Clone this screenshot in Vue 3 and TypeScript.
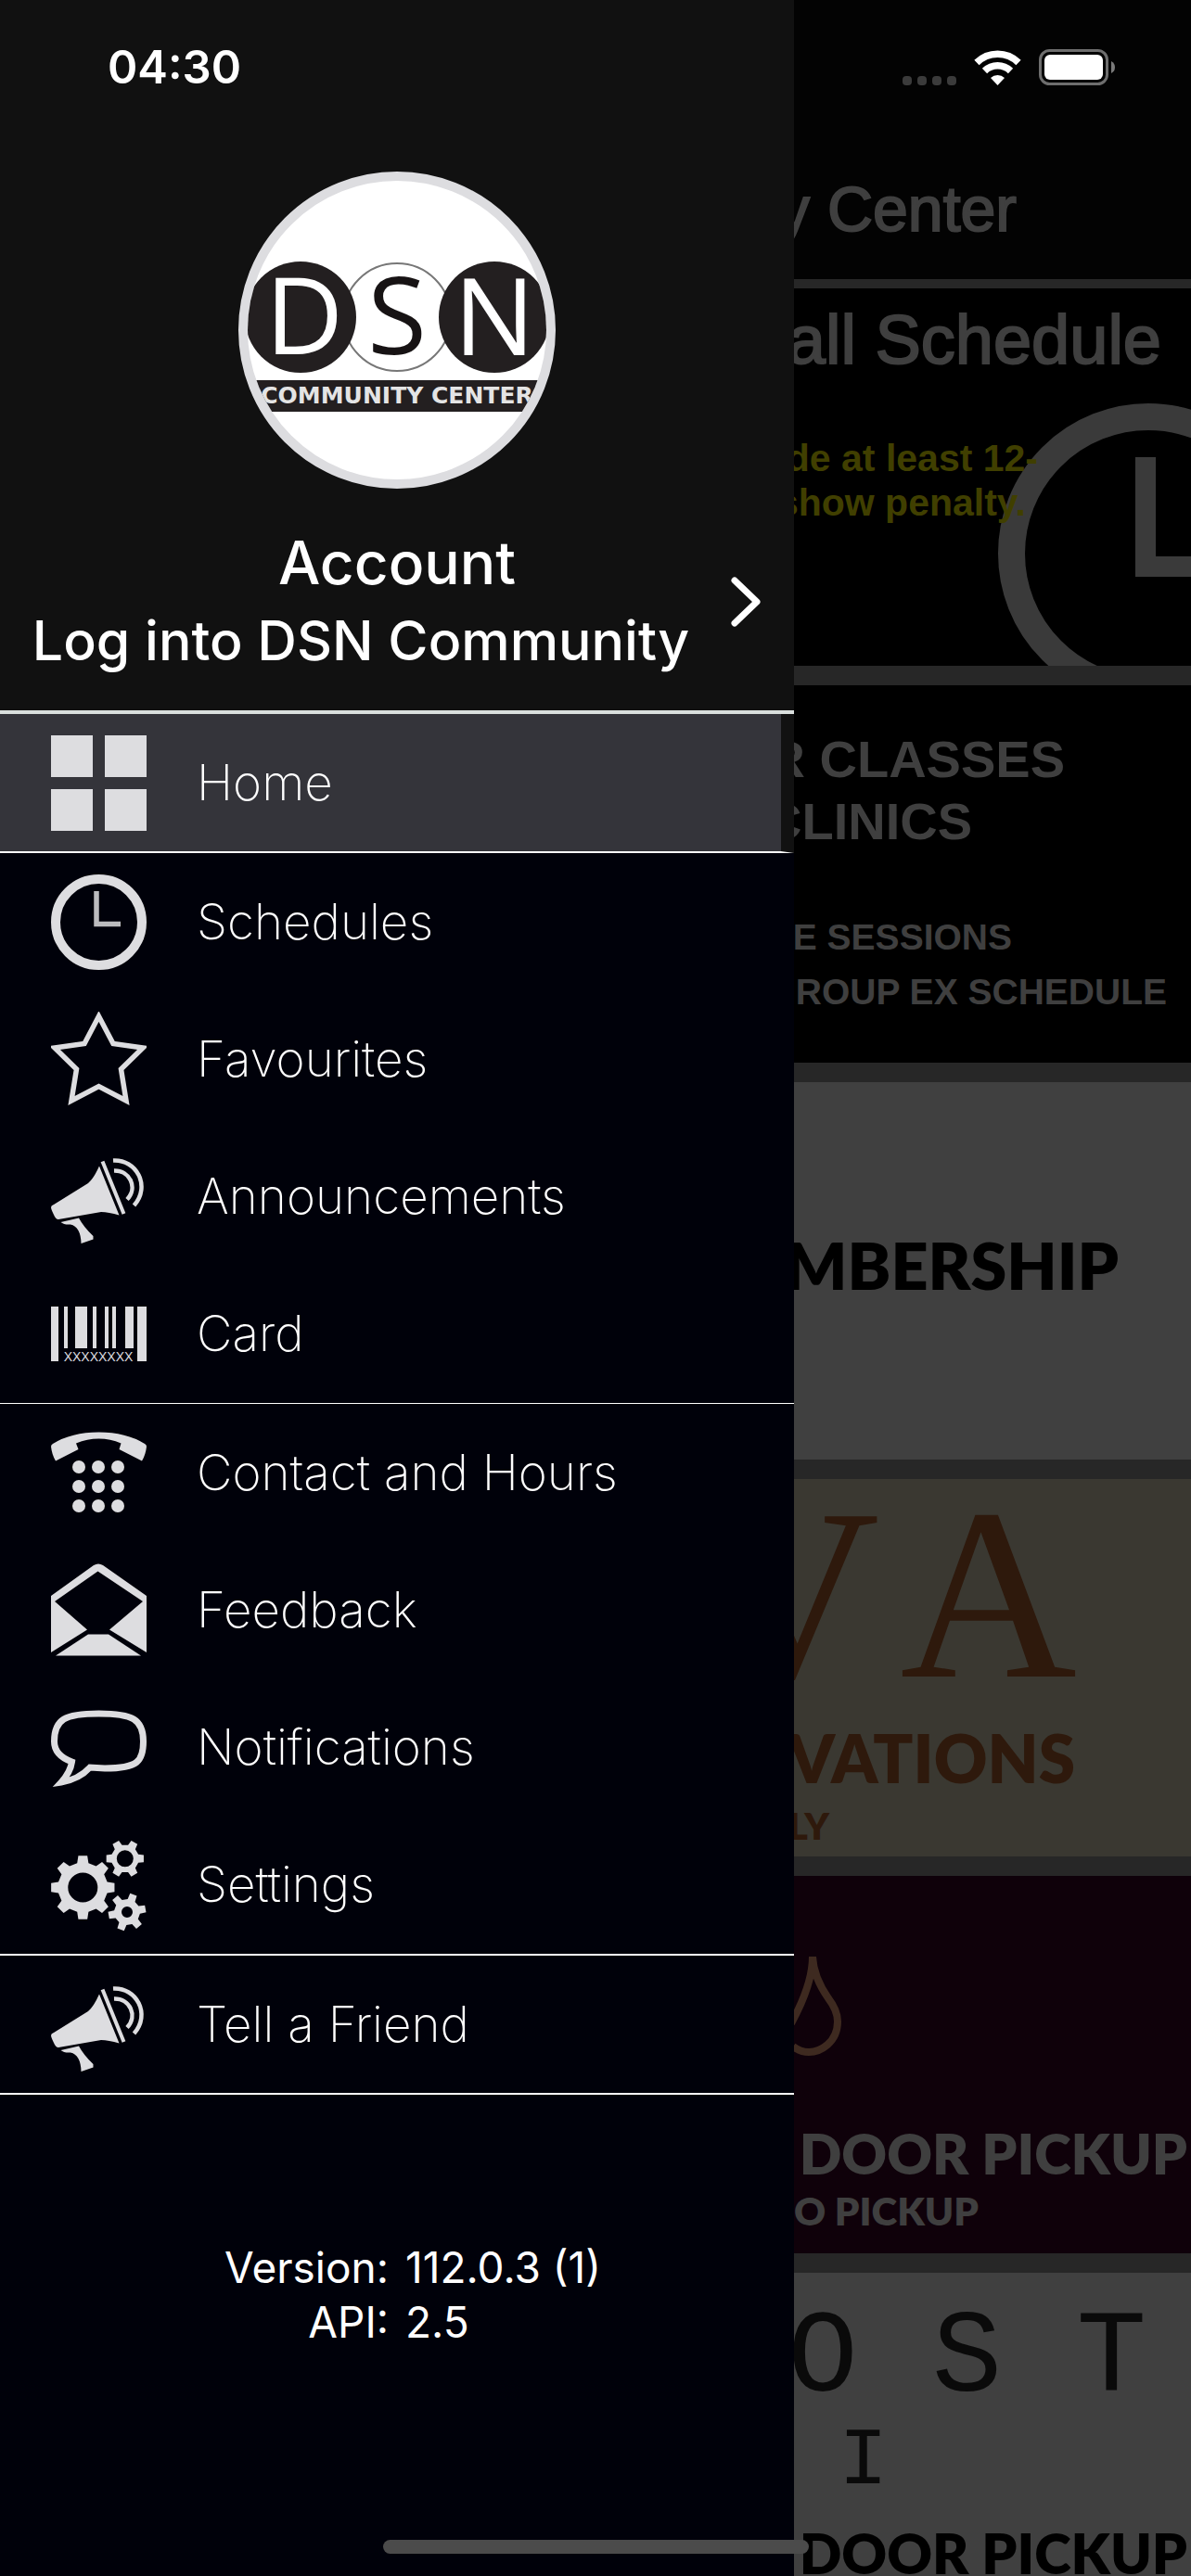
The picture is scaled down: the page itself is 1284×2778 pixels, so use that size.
<script setup lang="ts">
type IconName =
  | 'grid' | 'clock' | 'star' | 'megaphone' | 'barcode'
  | 'phone' | 'envelope' | 'bubble' | 'gears'

interface MenuItem {
  label: string
  icon: IconName
}

const groups: { id: string; items: MenuItem[] }[] = [
  { id: 'home', items: [{ label: 'Home', icon: 'grid' }] },
  {
    id: 'browse',
    items: [
      { label: 'Schedules', icon: 'clock' },
      { label: 'Favourites', icon: 'star' },
      { label: 'Announcements', icon: 'megaphone' },
      { label: 'Card', icon: 'barcode' },
    ],
  },
  {
    id: 'support',
    items: [
      { label: 'Contact and Hours', icon: 'phone' },
      { label: 'Feedback', icon: 'envelope' },
      { label: 'Notifications', icon: 'bubble' },
      { label: 'Settings', icon: 'gears' },
    ],
  },
  { id: 'share', items: [{ label: 'Tell a Friend', icon: 'megaphone' }] },
]

const bars: [number, number][] = [
  [14, 4], [26, 13], [45, 4], [58, 4], [66, 4], [80, 9],
]
const keys = [45, 66, 87].flatMap((y) => [30, 51, 72].map((x) => ({ x, y })))

/* Outline of a cog wheel with a round hole, for an even-odd fill. */
function gear(cx: number, cy: number, outer: number, root: number, hole: number, teeth: number, turn: number): string {
  const step = (Math.PI * 2) / teeth
  const pts: string[] = []
  const at = (r: number, a: number) => `${(cx + r * Math.cos(a)).toFixed(2)} ${(cy + r * Math.sin(a)).toFixed(2)}`
  for (let i = 0; i < teeth; i++) {
    const a = i * step + (turn * Math.PI) / 180
    pts.push(at(root, a - step * 0.29), at(outer, a - step * 0.18), at(outer, a + step * 0.18), at(root, a + step * 0.29))
  }
  return `M${pts.join('L')}Z M${cx - hole} ${cy}a${hole} ${hole} 0 1 0 ${hole * 2} 0a${hole} ${hole} 0 1 0 ${-hole * 2} 0Z`
}
const cogs = [
  gear(34.3, 54.5, 34.5, 27, 16, 8, 0),
  gear(79.8, 23.3, 20.5, 15, 9, 6, 0),
  gear(82, 81, 20.5, 14, 6, 6, -10),
].join(' ')
</script>

<template>
  <div class="app">
    <header class="status">
      <span class="time">04:30</span>
      <div class="indicators">
        <div class="signal"><i></i><i></i><i></i><i></i></div>
        <svg class="wifi" viewBox="0 0 51 38" aria-label="Wi-Fi">
          <g fill="none" stroke="#fff" stroke-width="7.5">
            <path d="M3 13.5A32 32 0 0 1 48 13.5" />
            <path d="M11.500 22.500A20 20 0 0 1 39.500 22.500" />
          </g>
          <path d="M18 30A11 11 0 0 1 33 30L25.500 38Z" fill="#fff" />
        </svg>
        <svg class="battery" viewBox="0 0 82 39" aria-label="Battery">
          <rect x="1.500" y="1.500" width="72" height="36" rx="10" fill="none" stroke="#6e6e6e" stroke-width="3" />
          <rect x="6" y="6" width="63" height="27" rx="6" fill="#fff" />
          <path d="M78 13Q82 15 82 19.500T78 26Z" fill="#7a7a7a" />
        </svg>
      </div>
    </header>

    <aside class="drawer">
      <a class="profile" href="#account">
        <span class="avatar">
          <svg viewBox="10 10 322 322" role="img" aria-label="DSN Community Center">
            <circle cx="171" cy="157" r="58" fill="#fff" stroke="#777" stroke-width="2" />
            <circle cx="67" cy="157" r="60" fill="#231f20" />
            <circle cx="276" cy="157" r="60" fill="#231f20" />
            <g class="logo-letters" text-anchor="middle">
              <text x="71" y="197" fill="#fff">D</text>
              <text x="171" y="197" fill="#171314">S</text>
              <text x="276" y="198" fill="#fff">N</text>
            </g>
            <rect x="0" y="225" width="342" height="34" fill="#231f20" />
            <text class="logo-name" x="171" y="250" text-anchor="middle" fill="#e4e4e4">COMMUNITY CENTER</text>
          </svg>
        </span>
        <span class="account">Account</span>
        <span class="login">Log into DSN Community</span>
        <svg class="chevron" viewBox="0 0 32 54" aria-hidden="true">
          <path d="M4 4L28 27L4 50" fill="none" stroke="#fff" stroke-width="7" stroke-linecap="round" stroke-linejoin="round" />
        </svg>
      </a>

      <nav>
        <ul v-for="group in groups" :key="group.id" class="group" :class="group.id">
          <li v-for="item in group.items" :key="item.label">
            <a class="item" href="#menu">
              <svg class="icon" viewBox="0 0 103 103" aria-hidden="true">
                <path v-if="item.icon === 'grid'" d="M0 0H45V45H0ZM58 0H103V45H58ZM0 58H45V103H0ZM58 58H103V103H58Z" />
                <g v-else-if="item.icon === 'clock'" fill="none" stroke="#dddde0">
                  <circle cx="51.500" cy="51.500" r="46.500" stroke-width="10" />
                  <path d="M49 18V53.500H75" stroke-width="5.500" stroke="#bcbcbf" />
                </g>
                <path
                  v-else-if="item.icon === 'star'" class="line" stroke-width="5.500"
                  d="M51.500 5L67 34.500L99 39L75.500 62L81 96L51.500 80.500L22 96L27.500 62L4 39L36 34.500Z"
                />
                <g v-else-if="item.icon === 'megaphone'">
                  <path d="M52 18.500L73.500 71.500Q62 68 54 68L8 76Q5 76 3 71Q0 65 0 63Q0 61 3 60L40 37Q46 32 52 18.500Z" />
                  <path d="M10.500 79L30 74.500Q35 84 45.500 94L45.500 97.500L32.500 102Q32 84 21 81.500Q14 82 10.500 79Z" />
                  <path class="line" stroke-width="4" d="M55.500 13.500L78.500 70" />
                  <path class="line" stroke-width="4.500" d="M68 23.500C85 23 94 42 82 54.500M67 12.500C92 11 108 40 89.500 61" />
                </g>
                <g v-else-if="item.icon === 'barcode'">
                  <rect x="0" y="22" width="8" height="59" />
                  <rect v-for="[x, w] in bars" :key="x" :x="x" y="22" :width="w" height="45" />
                  <rect x="93" y="22" width="10" height="59" />
                  <text class="code" x="51" y="81" text-anchor="middle">XXXXXXXX</text>
                </g>
                <g v-else-if="item.icon === 'phone'">
                  <path d="M0 23Q0 21 2 20Q22 7.500 51.500 7.500T101 20Q103 21 103 23Q102 32 98 38.500L73.500 26L75.500 19.500Q64 14.500 51.500 14.500T27 19.500L29.500 26L5 38.500Q1 32 0 23Z" />
                  <circle v-for="k in keys" :key="`${k.x}-${k.y}`" :cx="k.x" :cy="k.y" r="7" />
                </g>
                <g v-else-if="item.icon === 'envelope'">
                  <path d="M0 36L46 3Q51 0 56 3L103 36V97L63 72.500L99 42L50.500 9.500L4 42L39 72.500L0 97Z" />
                  <path d="M40 77.500H62L97 100.500H5Z" />
                </g>
                <path
                  v-else-if="item.icon === 'bubble'" class="line" stroke-width="7"
                  d="M51.500 15C88 15 99.500 21 99.500 45C99.500 66 94 74 58 74L42 73Q30 86 11 89Q21 78 22.500 67Q3.500 60 3.500 45C3.500 21 15 15 51.500 15Z"
                />
                <path v-else fill-rule="evenodd" :d="cogs" />
              </svg>
              <span>{{ item.label }}</span>
            </a>
          </li>
        </ul>
      </nav>

      <dl class="about">
        <dt>Version:</dt>
        <dd>112.0.3 (1)</dd>
        <dt>API:</dt>
        <dd>2.5</dd>
      </dl>
    </aside>

    <main class="page">
      <h1 class="title">y Center</h1>
      <section class="tile court">
        <svg class="court-clock" viewBox="0 0 208 284" aria-hidden="true">
          <circle cx="162" cy="163" r="147.500" fill="none" stroke="#3a3a3a" stroke-width="29" />
          <path d="M148 59H170V166H208V188H148Z" fill="#3a3a3a" />
        </svg>
        <h2>all Schedule</h2>
        <p class="warn first">de at least 12-</p>
        <p class="warn">show penalty.</p>
      </section>
      <section class="tile classes">
        <h2 class="top">R CLASSES</h2>
        <h2>CLINICS</h2>
        <p class="first">E SESSIONS</p>
        <p>GROUP EX SCHEDULE</p>
      </section>
      <section class="tile member">
        <h2>MBERSHIP</h2>
      </section>
      <section class="tile nova">
        <div class="brand"><span>V</span><span>A</span></div>
        <h2>VATIONS</h2>
        <p>LY</p>
      </section>
      <section class="tile wine">
        <svg class="drop" viewBox="0 0 51 108" aria-hidden="true">
          <path
            d="M20 0Q20 30 -3 72M20 0Q21 22 37 45Q47 58 47 70C47 93 28 103 16 103Q7 103 -1 97"
            fill="none" stroke="#3e2a20" stroke-width="8"
          />
        </svg>
        <h2>DOOR PICKUP</h2>
        <p>O PICKUP</p>
      </section>
      <section class="tile post">
        <div class="brand"><span>O</span><span>S</span><span>T</span></div>
        <p>I</p>
        <h2>DOOR PICKUP</h2>
      </section>
    </main>

    <div class="home-bar"></div>
  </div>
</template>

<style>
body {
  margin: 0;
  background: #00010a;
}
</style>

<style scoped>
.app {
  position: relative;
  display: flex;
  height: 100vh;
  overflow: hidden;
  font-family: Inter, "Liberation Sans", sans-serif;
  color: #fff;
}
h1, h2, p, ul, dl, dd {
  margin: 0;
  padding: 0;
}
ul {
  list-style: none;
}
a {
  color: inherit;
  text-decoration: none;
}
svg {
  display: block;
}

/* Status bar, floating over drawer and page */
.status {
  position: absolute;
  z-index: 2;
  top: 0;
  left: 0;
  right: 0;
  display: flex;
  justify-content: space-between;
  align-items: center;
  height: 145px;
  padding: 0 82px 0 116px;
  box-sizing: border-box;
}
.time {
  font-size: 49px;
  font-weight: 600;
}
.indicators {
  display: flex;
  align-items: flex-end;
  gap: 19px;
}
.signal {
  display: flex;
  gap: 6px;
}
.signal i {
  width: 10px;
  height: 10px;
  border-radius: 4px;
  background: #3b3b3b;
}
.wifi {
  width: 51px;
  height: 38px;
}
.battery {
  width: 82px;
  height: 39px;
}

/* Drawer */
.drawer {
  flex: 0 0 calc(100% * 2 / 3);
  background: #00010a;
}
.profile {
  display: grid;
  grid-template-columns: 1fr 78px;
  row-gap: 4px;
  padding: 185px 0 35px;
  background: #111;
  border-bottom: 4px solid #dadfdd;
  text-align: center;
  font-weight: 500;
  line-height: 80px;
  white-space: nowrap;
}
.avatar {
  grid-column: 1 / 3;
  justify-self: center;
  width: 322px;
  height: 322px;
  margin-bottom: 36px;
  border: 10px solid #dddde0;
  border-radius: 50%;
  background: #fff;
  overflow: hidden;
}
.logo-letters {
  font: 500 116px "Open Sans", "Noto Sans", sans-serif;
}
.logo-name {
  font: bold 25px "DejaVu Sans", sans-serif;
}
.account {
  grid-column: 1 / 3;
  grid-row: 2;
  font-size: 64px;
}
.login {
  grid-column: 1;
  grid-row: 3;
  font-size: 59px;
}
.chevron {
  grid-column: 2;
  grid-row: 2 / 4;
  align-self: center;
  width: 32px;
  height: 54px;
  margin-left: 10px;
}

.group {
  border-bottom: 2px solid #fff;
}
.home {
  background: #34343a;
  border-right: 14px solid #111;
}
.browse {
  padding-bottom: 1px;
  border-bottom-width: 1px;
}
.support {
  padding-bottom: 1px;
}
.item {
  display: flex;
  align-items: center;
  gap: 54px;
  height: 148px;
  padding-left: 55px;
  font-size: 53px;
  font-weight: 200;
}
.icon {
  width: 103px;
  height: 103px;
  fill: #dddde0;
}
.line {
  fill: none;
  stroke: #dddde0;
}
.code {
  font: 14px "Liberation Sans", sans-serif;
}

.about {
  display: grid;
  grid-template-columns: 1fr 1fr;
  column-gap: 18px;
  margin-top: 157px;
  font-size: 46px;
  line-height: 59px;
}
.about dt {
  text-align: right;
}

/* Dimmed page beside the drawer */
.page {
  flex: 1;
  min-width: 0;
  display: flex;
  flex-direction: column;
  gap: 21px;
  overflow: hidden;
  background: #272727;
  color: #3f3f3f;
}
.page h1, .page h2, .page p {
  white-space: nowrap;
}
.title {
  display: flex;
  justify-content: flex-end;
  flex: none;
  height: 151px;
  margin-bottom: -11px;
  padding: 150px 188px 0 0;
  background: #030303;
  font: 400 68px/150px "Liberation Sans", sans-serif;
  -webkit-text-stroke: 2px;
}
.tile {
  position: relative;
  flex: none;
  display: flex;
  flex-direction: column;
  align-items: flex-end;
  height: 407px;
  overflow: hidden;
}
.court, .classes {
  background: #000;
  font-family: "Liberation Sans", sans-serif;
}
.court h2 {
  position: relative;
  padding: 16px 32px 0 0;
  font-size: 74px;
  font-weight: 400;
  line-height: 80px;
  -webkit-text-stroke: 2px;
}
.court-clock {
  position: absolute;
  right: 0;
  bottom: 0;
  width: 208px;
  height: 284px;
}
.warn {
  position: relative;
  padding-right: 178px;
  color: #403f00;
  font-size: 41px;
  font-weight: bold;
  line-height: 48px;
}
.warn.first {
  margin-top: 63px;
  padding-right: 165px;
}
.classes h2 {
  padding-right: 236px;
  font-size: 56px;
  line-height: 67px;
}
.classes .top {
  margin-top: 46px;
  padding-right: 136px;
}
.classes p {
  padding-right: 26px;
  font-size: 39px;
  font-weight: bold;
  line-height: 59px;
}
.classes .first {
  margin-top: 62px;
  padding-right: 193px;
}
.member, .nova, .wine, .post {
  font-family: Lato, sans-serif;
  font-weight: 800;
}
.member {
  background: #404040;
  color: #000;
}
.member h2 {
  margin-top: 157px;
  padding-right: 78px;
  font-size: 70px;
  font-weight: 800;
  line-height: 80px;
}
.nova {
  background: #3a3831;
  color: #2e190c;
}
.nova .brand {
  display: flex;
  gap: 22px;
  padding-right: 123px;
  font: 264px/248px "Liberation Serif", serif;
}
.nova h2 {
  margin-top: 13px;
  padding-right: 125px;
  font-size: 71px;
  font-weight: 800;
  line-height: 80px;
}
.nova p {
  margin-top: 5px;
  padding-right: 390px;
  font-size: 40px;
  line-height: 56px;
}
.wine {
  background: #0f010a;
}
.drop {
  align-self: flex-start;
  width: 51px;
  height: 108px;
  margin-top: 87px;
}
.wine h2, .post h2 {
  padding-right: 4px;
  font-size: 60px;
  font-weight: 800;
  line-height: 60px;
}
.wine h2 {
  margin-top: 74px;
}
.wine p {
  margin-top: 4px;
  padding-right: 229px;
  font-size: 42px;
  line-height: 56px;
}
.post {
  background: #404040;
  color: #0a0a0a;
}
.post .brand {
  display: flex;
  gap: 80px;
  padding: 16px 48px 0 0;
  font: 126px/156px "Liberation Mono", monospace;
}
.post p {
  padding-right: 327px;
  font: 88px/64px "Liberation Mono", monospace;
}
.post h2 {
  margin-top: 36px;
  color: #000;
}

.home-bar {
  position: absolute;
  z-index: 2;
  left: 50%;
  bottom: 24px;
  width: 459px;
  height: 15px;
  margin-left: -229px;
  border-radius: 8px;
  background: #4b4b4b;
}
</style>
